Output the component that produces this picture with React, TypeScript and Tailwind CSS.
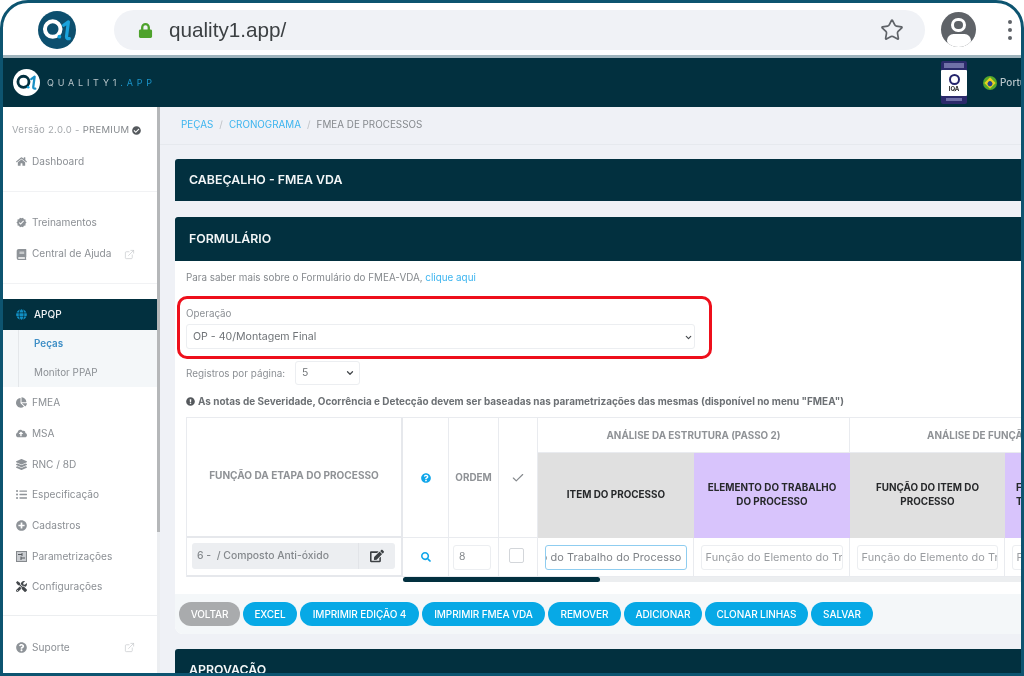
import React from "react";
import { ExternalLink, Check, Star, ChevronDown } from "lucide-react";
import {
  FaHome, FaBook, FaGlobe, FaCloudUploadAlt, FaListUl, FaPlusCircle, FaTools,
  FaQuestionCircle, FaEdit, FaSearch, FaExclamationCircle, FaLock, FaCheckCircle, FaLayerGroup, FaChartPie,
} from "react-icons/fa";
import { MdVerified } from "react-icons/md";

const Logo = ({ size, bg, ring, one }: { size: number; bg: string; ring: string; one: string }) => (
  <svg width={size} height={size} viewBox="0 0 40 40">
    <circle cx="20" cy="20" r="20" fill={bg} />
    <circle cx="15.5" cy="19" r="8.2" fill="none" stroke={ring} strokeWidth="4.2" />
    <circle cx="22.5" cy="27" r="2" fill="#12a5df" />
    <path d="M27 15 L32 11.5 L30 27 Q30 29.5 33 29" fill="none" stroke={one} strokeWidth="3.4" strokeLinecap="round" strokeLinejoin="round" />
  </svg>
);

const ParamIcon = () => (
  <svg width="11" height="11" viewBox="0 0 11 11">
    <rect x="0.5" y="0.5" width="10" height="10" fill="#c9ccd0" stroke="#85898d" />
    <path d="M2 3.5H6M6 2V5M9 7H5M5 5.5V9" stroke="#55595d" fill="none" />
  </svg>
);

const Item = ({ icon, label, ext }: { icon: React.ReactNode; label: string; ext?: boolean }) => (
  <div className="h-[30.7px] shrink-0 flex items-center pl-[11px] pr-[22px] text-[#8b8f94] text-[10.1px]">
    <span className="w-[14px] flex justify-center text-[#8e9398] text-[11px] mr-[4px]">{icon}</span>
    <span>{label}</span>
    {ext && <ExternalLink className="ml-auto text-[#c4c7ca]" size={11} strokeWidth={1.5} />}
  </div>
);

const Btn = ({ w, label, gray }: { w: string; label: string; gray?: boolean }) => (
  <button className={`${w} h-[24px] rounded-full text-white text-[10px] font-medium tracking-[-0.1px] ${gray ? "bg-[#a9abad]" : "bg-[#07a9e6]"}`}>
    {label}
  </button>
);

const Field = ({ text, focus }: { text: string; focus?: boolean }) => (
  <div className={`mx-[6px] h-[25px] w-[calc(100%-13px)] bg-white rounded-[3px] border overflow-hidden flex items-center px-[4px] font-normal text-[10.9px] tracking-[0.1px] whitespace-nowrap ${focus ? "border-[#8fcdf0] justify-end text-[#7d8186]" : "border-[#eceef1] text-[#9a9da1]"}`}>
    {text}
  </div>
);

export default function App() {
  const cell = "border-r border-b border-[#e9ebef] flex items-center justify-center";
  return (
    <div className="relative w-[1024px] h-[676px] overflow-hidden bg-white flex flex-col blur-[0.35px] font-['Inter','Noto_Sans',sans-serif]">
      {/* browser bar */}
      <div className="h-[55px] shrink-0 flex items-center bg-white pt-[4px]">
        <div className="w-[114px] flex justify-center">
          <Logo size={38} bg="#0d4f6e" ring="#ffffff" one="#1aa3dc" />
        </div>
        <div className="w-[811px] h-[40px] mt-[1px] rounded-full bg-[#f0f2f6] flex items-center pl-[24px] pr-[21px]">
          <FaLock className="text-[#4ea22c] text-[15px]" />
          <span className="ml-[16px] text-[20.7px] text-[#3c4043] font-['Liberation_Sans',sans-serif]">quality1.app/</span>
          <Star className="ml-auto text-[#5f6368]" size={24} strokeWidth={1.7} />
        </div>
        <div className="ml-[16px] w-[35px] h-[35px] rounded-full bg-[#5f6368] overflow-hidden flex flex-col items-center">
          <div className="w-[15px] h-[15px] mt-[6px] rounded-full border-[3px] border-white" />
          <div className="w-[24px] h-[14px] mt-[2px] rounded-full bg-white" />
        </div>
        <div className="ml-[32px] flex flex-col gap-[4px]">
          <div className="w-[4px] h-[4px] rounded-full bg-[#5f6368]" />
          <div className="w-[4px] h-[4px] rounded-full bg-[#5f6368]" />
          <div className="w-[4px] h-[4px] rounded-full bg-[#5f6368]" />
        </div>
      </div>
      <div className="h-[3px] shrink-0 bg-[#9fb4bd]" />
      {/* app header */}
      <div className="h-[49px] shrink-0 bg-[#02303f] flex items-center pl-[13px]">
        <Logo size={27} bg="#ffffff" ring="#02303f" one="#1a8fc4" />
        <span className="ml-[7px] text-[9px] tracking-[3.8px] text-[#b8c5ca]">
          QUALITY1<span className="text-[#1a94c9]">.APP</span>
        </span>
        <div className="ml-auto w-[26px] h-[43px] mr-[16px] rounded-[2px] bg-[#2b2a6b] flex flex-col items-center justify-between py-[1px]">
          <div className="w-[20px] h-[5px] mt-[1px] bg-[#8f8fc0] opacity-70" />
          <div className="w-full h-[26px] bg-white rounded-[1px] flex flex-col items-center justify-center">
            <div className="w-[11px] h-[11px] rounded-full border-[2.5px] border-[#23236b]" />
            <span className="text-[6px] leading-[7px] font-bold text-[#222]">IQA</span>
          </div>
          <div className="w-[16px] h-[3px] mb-[2px] bg-[#8f8fc0] opacity-70" />
        </div>
        <div className="w-[14px] h-[14px] rounded-full bg-[#54a82c] flex items-center justify-center">
          <div className="w-[8px] h-[8px] rotate-45 bg-[#e8d21f] flex items-center justify-center">
            <div className="w-[5px] h-[5px] rounded-full bg-[#2a3f8f]" />
          </div>
        </div>
        <span className="ml-[3px] w-[24px] overflow-hidden text-[10px] font-medium text-[#b9c6cb] whitespace-nowrap">Português</span>
      </div>
      <div className="flex-1 min-h-0 flex">
        {/* sidebar */}
        <aside className="w-[157px] shrink-0 pl-[3px] bg-white flex flex-col overflow-hidden">
          <div className="pl-[9px] pt-[9px] h-[37px] shrink-0 flex items-center text-[9.5px] tracking-[0.3px] text-[#a4a8ac] whitespace-nowrap">
            Versão 2.0.0 -&nbsp;<span className="text-[#85898d]">PREMIUM</span>
            <FaCheckCircle className="ml-[3px] text-[#55595d] text-[9px]" />
          </div>
          <div className="h-[32px] shrink-0 mt-[2px]"><Item icon={<FaHome />} label="Dashboard" /></div>
          <div className="h-[14px] shrink-0 border-b border-[#f1f2f4]" />
          <div className="h-[15px] shrink-0" />
          <Item icon={<MdVerified />} label="Treinamentos" />
          <div className="h-[1px] shrink-0" />
          <Item icon={<FaBook />} label="Central de Ajuda" ext />
          <div className="h-[15px] shrink-0 border-b border-[#f1f2f4]" />
          <div className="h-[15px] shrink-0" />
          <div className="h-[31px] shrink-0 bg-[#02303f] flex items-center pl-[13px] text-[#f2f5f6] text-[10px] font-medium">
            <FaGlobe className="text-[#118fc4] text-[11px] mr-[7px]" />APQP
          </div>
          <div className="h-[57px] shrink-0 bg-[#f4f7f9] pl-[15px] flex flex-col">
            <div className="border-l border-[#e4e7ea] h-full pl-[15px] text-[9.9px]">
              <div className="h-[27px] flex items-center font-semibold text-[#3f8fc6]">Peças</div>
              <div className="h-[30px] flex items-center text-[#8b8f94]">Monitor PPAP</div>
            </div>
          </div>
          <Item icon={<FaChartPie />} label="FMEA" />
          <Item icon={<FaCloudUploadAlt />} label="MSA" />
          <Item icon={<FaLayerGroup />} label="RNC / 8D" />
          <Item icon={<FaListUl />} label="Especificação" />
          <Item icon={<FaPlusCircle />} label="Cadastros" />
          <Item icon={<ParamIcon />} label="Parametrizações" />
          <Item icon={<FaTools className="text-[#44484c]" />} label="Configurações" />
          <div className="h-[14px] shrink-0 border-b border-[#eceef0]" />
          <div className="h-[16px] shrink-0" />
          <Item icon={<FaQuestionCircle />} label="Suporte" ext />
        </aside>
        {/* scrollbar */}
        <div className="w-[3px] shrink-0 bg-[#eceef1] flex flex-col">
          <div className="h-[425px] bg-[#b5b7b9]" />
        </div>
        {/* main */}
        <main className="flex-1 min-w-0 bg-[#eff1f6] overflow-hidden flex flex-col">
          <div className="h-[38px] shrink-0 border-b border-[#e6e9ee] pl-[21px] pb-[2px] flex items-center text-[9.85px] text-[#85898d] whitespace-nowrap">
            <span className="text-[#3bb4ef]">PEÇAS</span>
            <span className="mx-[6px] text-[#c0c3c7]">/</span>
            <span className="text-[#3bb4ef]">CRONOGRAMA</span>
            <span className="mx-[6px] text-[#c0c3c7]">/</span>
            <span>FMEA DE PROCESSOS</span>
          </div>
          <div className="ml-[15px] w-[900px] mt-[14px] h-[42px] shrink-0 bg-[#02303f] rounded-t-[3px] flex items-center pl-[14px] text-[12.35px] font-semibold text-[#f3f6f7]">
            CABEÇALHO - FMEA VDA
          </div>
          <section className="ml-[15px] w-[900px] mt-[16px] shrink-0 bg-white rounded-b-[8px]">
            <div className="h-[44px] bg-[#02303f] rounded-t-[3px] flex items-center pl-[14px] text-[12.35px] font-semibold text-[#f3f6f7]">
              FORMULÁRIO
            </div>
            <div className="px-[11px] pt-[9px] text-[9.85px] text-[#85898d] h-[35px]">
              Para saber mais sobre o Formulário do FMEA-VDA, <span className="text-[#3bb4ef]">clique aqui</span>
            </div>
            <div className="ml-[2px] w-[535px] h-[63px] border-[3px] border-[#ee0f1b] rounded-[10px] pl-[6px] pr-[14px] pt-[9px]">
              <div className="text-[9.8px] text-[#8b8f94] leading-[12px]">Operação</div>
              <div className="mt-[4px] h-[25px] pt-[1px] border border-[#eceef1] rounded-[3px] flex items-center justify-between pl-[6px] pr-[1px] text-[10.6px] text-[#6f7377]">
                OP - 40/Montagem Final
                <ChevronDown size={9} strokeWidth={3} className="text-[#44484c]" />
              </div>
            </div>
            <div className="mt-[2px] ml-[11px] h-[24px] flex items-center text-[9.9px] text-[#8b8f94]">
              <span className="w-[109px]">Registros por página:</span>
              <div className="w-[65px] h-[24px] border border-[#eceef1] rounded-[3px] flex items-center justify-between pl-[6px] pr-[4px] text-[10.4px] text-[#6f7377]">
                5<ChevronDown size={10} strokeWidth={3} className="text-[#44484c]" />
              </div>
            </div>
            <div className="mt-[8px] ml-[11px] h-[16px] flex items-center text-[9.95px] font-bold text-[#6c7074] whitespace-nowrap">
              <FaExclamationCircle className="text-[#55595d] text-[9px] mr-[3px]" />
              As notas de Severidade, Ocorrência e Detecção devem ser baseadas nas parametrizações das mesmas (disponível no menu "FMEA")
            </div>
            {/* table */}
            <div className="mt-[8px] ml-[11px] w-[878px] overflow-hidden">
              <div className="grid grid-cols-[216px_46px_50px_39px_156px_156px_155px_156px] grid-rows-[35px_85px_39px] border-t border-l border-[#e9ebef] text-[9.9px] font-bold">
                <div className="row-span-2 border-r-2 border-b-2 border-[#e6e8ec] flex items-center justify-center pb-[2px] text-[10.05px] text-[#8f9296]">FUNÇÃO DA ETAPA DO PROCESSO</div>
                <div className={`${cell} row-span-2`}><FaQuestionCircle className="text-[#0fa6ea] text-[10px]" /></div>
                <div className={`${cell} row-span-2 text-[#8f9296] text-[9.9px]`}>ORDEM</div>
                <div className={`${cell} row-span-2`}><Check size={14} className="text-[#85898d]" strokeWidth={2} /></div>
                <div className={`${cell} col-span-2 text-[#8f9296]`}>ANÁLISE DA ESTRUTURA (PASSO 2)</div>
                <div className={`${cell} col-span-2 text-[#8f9296] pr-[1px]`}>ANÁLISE DE FUNÇÃO (PASSO 3)</div>
                <div className="bg-[#e0e0e0] flex items-center justify-center text-center pb-[2px] text-[#26282a]">ITEM DO PROCESSO</div>
                <div className="bg-[#d8c4fc] flex items-center justify-center text-center pb-[4px] text-[#26282a] leading-[14px] px-[6px]">ELEMENTO DO TRABALHO DO PROCESSO</div>
                <div className="bg-[#e0e0e0] flex items-center justify-center text-center pb-[4px] text-[#26282a] leading-[14px] px-[12px]">FUNÇÃO DO ITEM DO PROCESSO</div>
                <div className="bg-[#d8c4fc] flex items-center justify-start pb-[4px] pl-[11px] text-[#26282a] leading-[14px]">FUNÇÃO DO ELEMENTO<br />TRABALHO DO PROCESSO</div>
                <div className="border-r-2 border-b-2 border-[#e6e8ec] pl-[5px] pr-[6px] py-[5px]">
                  <div className="h-[26px] bg-[#eceef1] rounded-[3px] flex items-center font-medium text-[10.4px] text-[#85898d]">
                    <span className="pl-[5px] flex-1 whitespace-nowrap">6 -&nbsp; / Composto Anti-óxido</span>
                    <div className="w-[37px] h-full border-l border-[#e2e4e8] flex items-center justify-center">
                      <FaEdit className="text-[#3c4043] text-[14px]" />
                    </div>
                  </div>
                </div>
                <div className={cell}><FaSearch className="text-[#0fa6ea] text-[10px]" /></div>
                <div className={`${cell} justify-start pl-[4px]`}>
                  <div className="w-[38px] h-[25px] border border-[#eceef1] rounded-[3px] flex items-center pl-[5px] font-normal text-[10.4px] text-[#85898d]">8</div>
                </div>
                <div className={`${cell} pr-[4px] pb-[3px]`}>
                  <div className="w-[15px] h-[15px] border border-[#d3d6da] rounded-[2px]" />
                </div>
                <div className={cell}><Field text="Elemento do Trabalho do Processo" focus /></div>
                <div className={cell}><Field text="Função do Elemento do Trabalho" /></div>
                <div className={cell}><Field text="Função do Elemento do Trabalho" /></div>
                <div className={cell}><Field text="Função do Elemento do Trabalho" /></div>
              </div>
              <div className="ml-[217px] h-[5px] bg-[#eceef0] rounded-full">
                <div className="w-[197px] h-full rounded-full bg-[#02303f]" />
              </div>
            </div>
            <div className="mt-[12px] h-[40px] bg-[#f4f7f9] rounded-b-[8px] pl-[4px] flex items-center gap-[3px]">
              <Btn w="w-[61px]" label="VOLTAR" gray />
              <Btn w="w-[54px]" label="EXCEL" />
              <Btn w="w-[119px]" label="IMPRIMIR EDIÇÃO 4" />
              <Btn w="w-[123px]" label="IMPRIMIR FMEA VDA" />
              <Btn w="w-[73px]" label="REMOVER" />
              <Btn w="w-[78px]" label="ADICIONAR" />
              <Btn w="w-[103px]" label="CLONAR LINHAS" />
              <Btn w="w-[62px]" label="SALVAR" />
            </div>
          </section>
          <div className="ml-[15px] w-[900px] mt-[15px] h-[43px] shrink-0 bg-[#02303f] rounded-t-[3px] flex items-center pl-[14px] text-[12.35px] font-semibold text-[#f3f6f7]">
            APROVAÇÃO
          </div>
        </main>
      </div>
      {/* device frame */}
      <div className="absolute inset-0 pointer-events-none border-[3px] border-[#0d5470] rounded-t-[28px]" />
    </div>
  );
}
